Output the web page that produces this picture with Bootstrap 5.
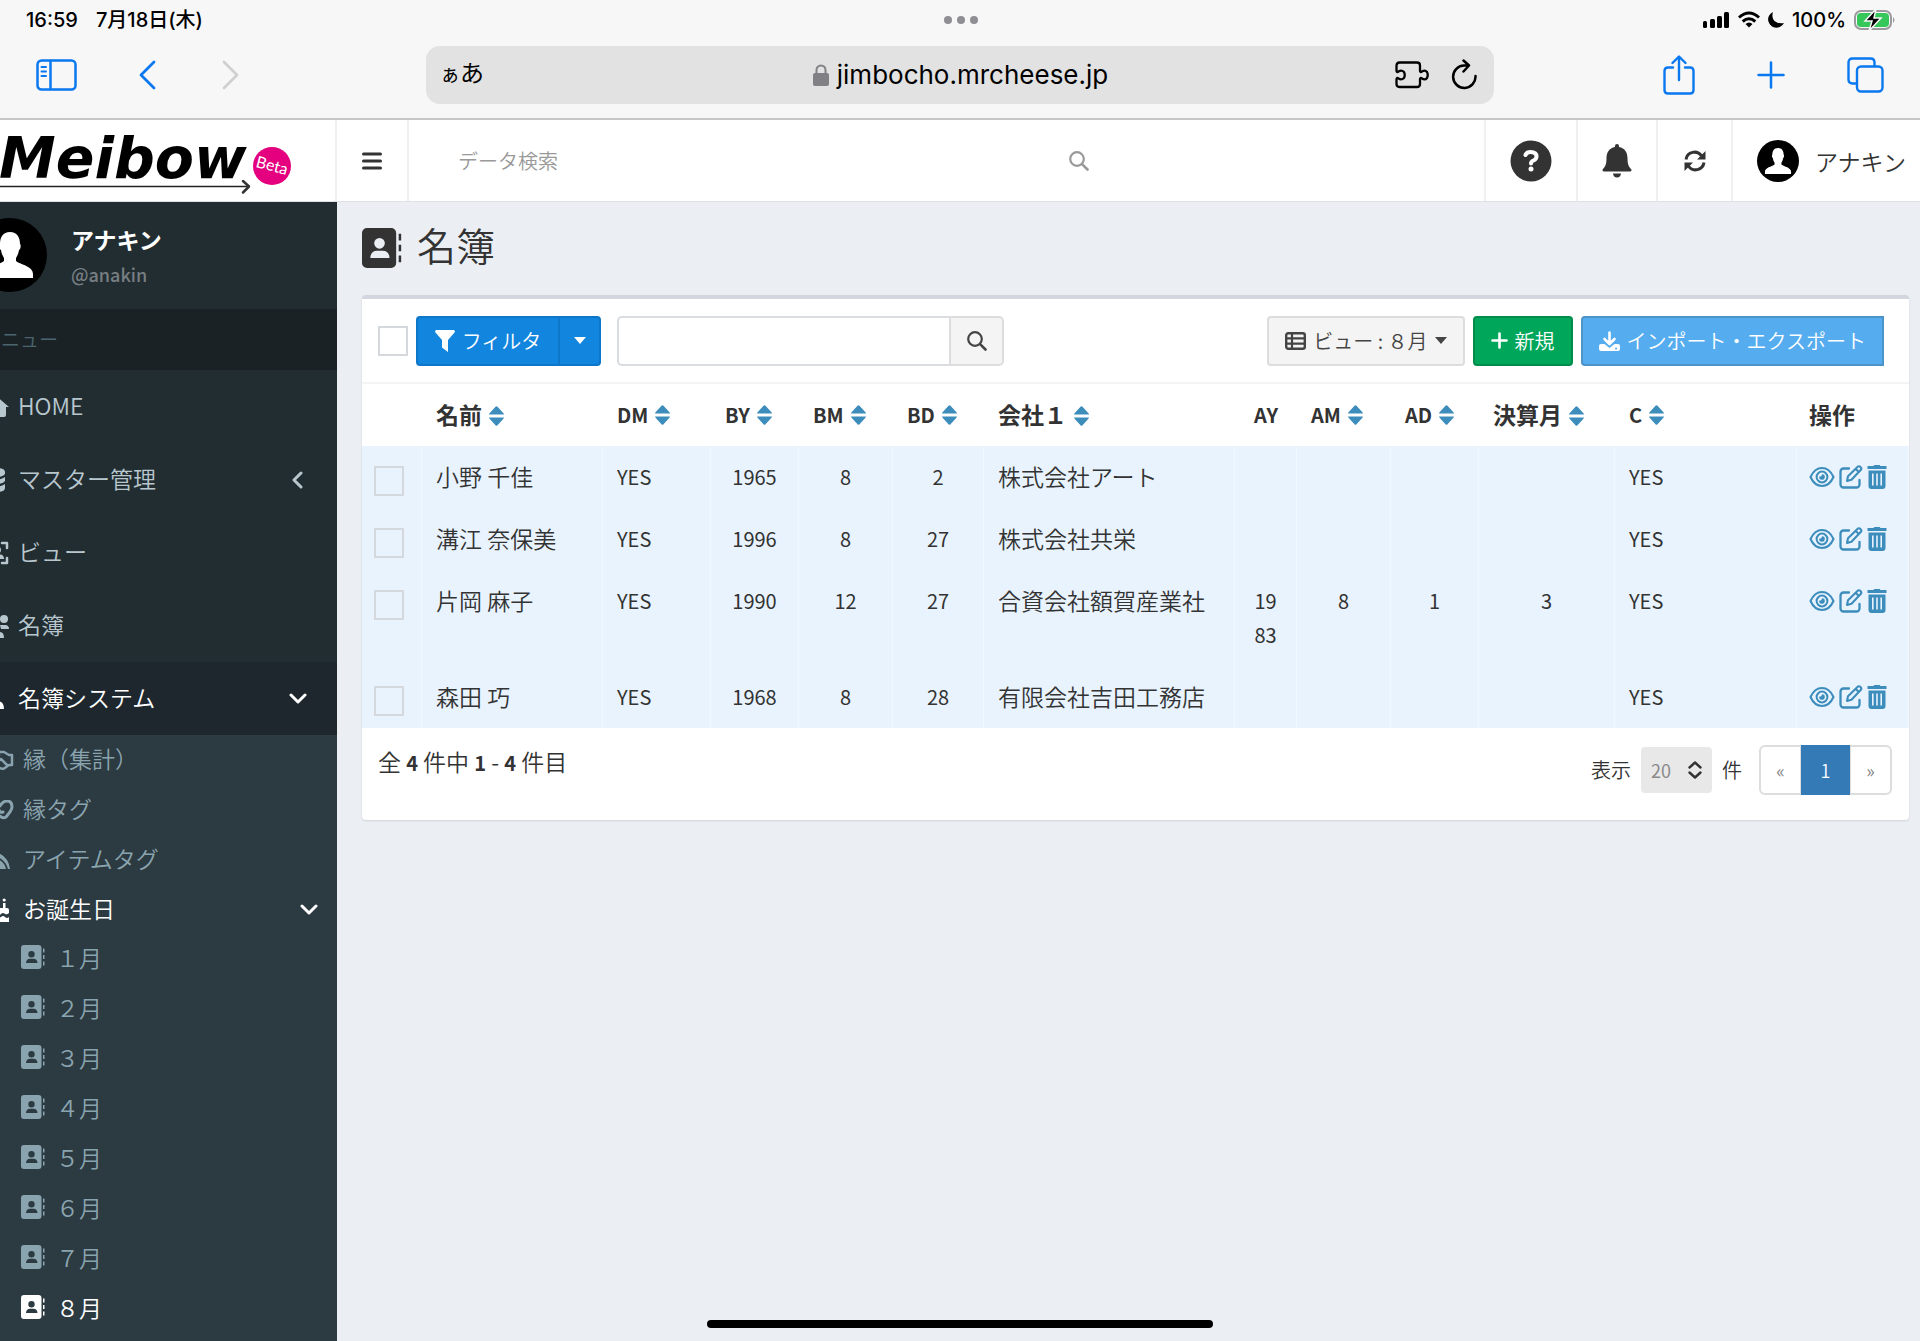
<!DOCTYPE html>
<html lang="ja">
<head>
<meta charset="utf-8">
<meta name="viewport" content="width=device-width, initial-scale=1">
<title>名簿 | Meibow</title>
<link href="https://cdn.jsdelivr.net/npm/bootstrap@5.3.0/dist/css/bootstrap.min.css" rel="stylesheet">
<style>
  body { font-family: "Noto Sans CJK JP", sans-serif; font-size: 23px; font-weight: 350; line-height: 34px; color: #333; background: #ebeff4; min-height: 100vh; }
  a { text-decoration: none; color: inherit; }
  svg { flex: none; display: block; }
  .ln { fill: none; stroke: currentColor; stroke-linecap: round; stroke-linejoin: round; }
  .bare { background: none; border: 0; padding: 0; color: inherit; }

  /* tablet browser frame */
  .chrome { background: #f7f7f7; border-bottom: 2px solid #c6c6c8; height: 120px; font-family: Inter, "Noto Sans CJK JP", sans-serif; font-weight: 400; color: #000; }
  .status-line { display: grid; grid-template-columns: 1fr auto 1fr; height: 39px; padding: 0 24px 0 26px; font-size: 20px; font-weight: 500; align-items: center; }
  .status-left { gap: 18px; }
  .tool-line { display: grid; grid-template-columns: 426px minmax(0, 1fr) 426px; height: 71px; align-items: center; color: #0a78ef; }
  .tools-left { padding-left: 36px; gap: 62px; }
  .tools-right { padding-right: 36px; gap: 62px; }
  .url-bar { background: #e2e2e2; border-radius: 14px; height: 58px; padding: 0 17px 0 14px; color: #000; display: grid; grid-template-columns: 1fr auto 1fr; align-items: center; }
  .url-tools { gap: 22px; }
  .url-host { font-size: 26px; }
  .aa-small { font-size: 20px; }
  .aa-large { font-size: 24px; }
  .home-bar { position: fixed; left: 50%; bottom: 13px; width: 506px; height: 8px; margin-left: -253px; border-radius: 5px; background: #000; z-index: 10; }

  /* header */
  .top-header { height: 82px; background: #fff; border-bottom: 1px solid #dde1e6; }
  .brand-cell { width: 335px; }
  .head-cell { border: 0; border-left: 2px solid #f0f0f2; height: 81px; display: flex; align-items: center; justify-content: center; color: #333; }
  .w-toggle { width: 72px; } .w-help { width: 92px; } .w-bell { width: 80px; } .w-sync { width: 75px; } .w-user { width: 189px; padding-left: 10px; gap: 16px; }
  .head-search { padding-left: 49px; max-width: 680px; color: #999; }
  .head-search input { border: 0; outline: 0; font-size: 20px; min-width: 0; padding: 0; font-weight: 350; }
  .head-search input::placeholder { color: #999; }

  /* sidebar */
  .app-side { width: 337px; background: #222d32; overflow: hidden; color: #b8c7ce; }
  .side-inner { margin-left: -27px; }
  .user-panel { height: 107px; gap: 24px; padding-top: 16px; color: #fff; line-height: 35px; font-weight: 700; }
  .user-handle { font-size: 18px; color: #777e82; font-weight: 500; }
  .menu-title { height: 61px; background: #1a2226; color: #4b646f; font-size: 19px; padding-left: 9px; line-height: 60px; }
  .side-link { height: 73px; padding: 0 30px 0 13px; gap: 9px; display: flex; align-items: center; }
  .side-link.is-open { background: #1e272d; color: #fff; }
  .sub-menu { background: #2c3a41; color: #8aa4af; }
  .sub-link { height: 50px; padding: 0 19px 0 17px; gap: 9px; display: flex; align-items: center; }
  .sub-link.is-open { height: 49px; color: #fff; }
  .month-link { height: 50px; padding: 0 0 4px 48px; gap: 11px; display: flex; align-items: center; }
  .month-link.is-current { color: #fff; }
  .side-link span, .sub-link span { flex: 1; padding-bottom: 4px; }

  /* content */
  .content-area { padding: 0 11px 0 25px; }
  .page-title { height: 93px; font-size: 39px; font-weight: 350; line-height: 60px; gap: 15px; margin: 0; padding-bottom: 2px; }
  .panel-box { background: #fff; border-top: 4px solid #d3d6de; border-radius: 4px; box-shadow: 0 1px 2px rgba(0,0,0,.12); }
  .panel-tools { height: 85px; padding: 0 25px 0 16px; border-bottom: 2px solid #f4f4f4; }
  .tick { appearance: none; width: 30px; height: 30px; border: 2px solid #d5d8dc; background: transparent; margin: 0; display: block; flex: none; }
  .tool-btn { height: 50px; font-size: 20px; line-height: 30px; border-radius: 4px; border: 2px solid; display: flex; align-items: center; gap: 7px; padding: 0 16px; white-space: nowrap; font-weight: 350; }
  .c-blue { background: #1285de; border-color: #0f77c9; color: #fff; }
  .c-gray { background: #f4f4f4; border-color: #ddd; color: #444; }
  .c-green { background: #00a65a; border-color: #008d4c; color: #fff; }
  .c-sky { background: #55acee; border-color: #4a94ca; color: #fff; border-radius: 4px 0 0 4px; }
  .filter-main { width: 144px; justify-content: center; border-radius: 4px 0 0 4px; }
  .filter-drop { width: 43px; margin-left: -2px; padding: 0; justify-content: center; border-radius: 0 4px 4px 0; }
  .find-box { height: 50px; width: 332px; border: 2px solid #d9dce0; border-right: 0; border-radius: 5px 0 0 5px; font-size: 20px; padding: 0 12px; }
  .find-btn { width: 55px; justify-content: center; border-radius: 0 5px 5px 0; padding: 0; }

  .roster { table-layout: fixed; width: 100%; margin: 0; border-collapse: separate; border-spacing: 0; }
  .roster th, .roster td { padding: 14px; vertical-align: top; font-size: 20px; line-height: 34px; font-weight: 400; }
  .roster th { white-space: nowrap; font-weight: 700; }
  .roster th.jp, .roster td.jp { font-size: 23px; white-space: nowrap; padding-top: 13px; }
  .roster td.jp { font-weight: 350; }
  .roster tbody td { background: #e9f3fe; border-right: 1px solid #f1f7fe; }
  .roster .num { text-align: center; word-break: break-all; }
  .roster td.pick { padding: 20px 0 0 12px; }
  .roster td.acts, .roster th.acts { padding-left: 12px; }
  .sorter { display: inline-block; margin-left: 7px; color: #3c8dbc; vertical-align: -2px; }
  .act-set { gap: 4px; height: 34px; color: #3c8dbc; }

  .panel-foot { height: 92px; padding: 0 17px 0 16px; }
  .count-note { margin-top: 16px; }
  .count-note b { font-size: 20px; }
  .per-page { font-size: 20px; gap: 10px; margin-top: 17px; }
  .per-page select { appearance: none; width: 71px; height: 46px; border: 0; border-radius: 4px; background: #e8e8e8; color: #8a8a8a; font-size: 18px; padding: 0 10px; }
  .select-wrap svg { position: absolute; right: 10px; top: 14px; pointer-events: none; }
  .pager { height: 50px; margin: 0 0 0 7px; }
  .pager .page-link { height: 50px; width: 43px; border: 2px solid #ddd; padding: 0; display: flex; align-items: center; justify-content: center; color: #777; font-size: 18px; }
  .pager .active .page-link { background: #337ab7; border-color: #337ab7; color: #fff; width: 49px; }
</style>
</head>
<body class="d-flex flex-column">

<svg width="0" height="0" class="position-absolute" aria-hidden="true">
  <symbol id="i-book" viewBox="0 0 24 24"><path fill="currentColor" fill-rule="evenodd" d="M3 0h14.500a3 3 0 0 1 3 3v18a3 3 0 0 1-3 3H3a3 3 0 0 1-3-3V3a3 3 0 0 1 3-3zm7.500 6a3.200 3.200 0 1 0 0 6.400 3.200 3.200 0 0 0 0-6.400zM5 18h11.500c0-2.900-1.800-4.300-4-4.300h-3.500c-2.200 0-4 1.400-4 4.300z"/><path fill="currentColor" d="M22 3.500h1.500v4H22zM22 10h1.500v4H22zM22 16.500h1.500v4H22z"/></symbol>
  <symbol id="i-down" viewBox="0 0 18 11"><path class="ln" stroke-width="3" d="M2 2l7 7 7-7"/></symbol>
  <symbol id="i-find" viewBox="0 0 20 20"><circle class="ln" cx="8" cy="8" r="6.800" stroke-width="2.200"/><path class="ln" stroke-width="2.600" d="M13.300 13.300L18.500 18.500"/></symbol>
  <symbol id="i-sort" viewBox="0 0 15 20"><path fill="currentColor" d="M0 8.500C0 8 .5 7.300 1 6.800L6.500.7q1-1 2 0L14 6.800c.5.500 1 1.200 1 1.700zM0 11.500h15c0 .5-.5 1.200-1 1.700l-5.500 6.100q-1 1-2 0L1 13.200c-.5-.5-1-1.200-1-1.700z"/></symbol>
  <symbol id="i-eye" viewBox="0 0 26 22"><path class="ln" stroke-width="2.100" d="M1.500 11C4 5.500 8 2 13 2s9 3.500 11.500 9C22 16.500 18 20 13 20S4 16.500 1.500 11z"/><circle class="ln" cx="13" cy="11" r="5.400" stroke-width="2"/><path fill="currentColor" d="M13 8.200a2.800 2.800 0 1 1-2.700 2.200c1.400.6 2.500-.5 2.700-2.200z"/></symbol>
  <symbol id="i-edit" viewBox="0 0 24 24"><path class="ln" stroke-width="2.300" d="M10 3.500H4.500a3 3 0 0 0-3 3V19.500a3 3 0 0 0 3 3h13a3 3 0 0 0 3-3V15"/><path class="ln" stroke-width="2.100" d="M8 16l1-4.700L18.700 1.700q1.300-1 2.700.2 1.600 1.500.5 2.900L12.500 14.700zM16.700 3.900l3.200 3.200"/></symbol>
  <symbol id="i-trash" viewBox="0 0 20 24"><path fill="currentColor" fill-rule="evenodd" d="M6.500 1l.8-1h5.400l.8 1H19.500v3H.5V1zM1.500 5.500h17V21a3 3 0 0 1-3 3h-11a3 3 0 0 1-3-3zM5 8.500v12h1.600v-12zm4.200 0v12h1.600v-12zm4.200 0v12H15v-12z"/></symbol>
  <symbol id="i-user" viewBox="0 0 74 74"><circle cx="37" cy="37" r="37" fill="#000"/><path fill="#fff" d="M37 14c7 0 10 5 10 12 1 0 1 5-1 6-.5 4-2 6-3 8v3c5 4 17 5 17 13v4H14v-4c0-8 12-9 17-13v-3c-1-2-2.500-4-3-8-2-1-2-6-1-6 0-7 3-12 10-12z"/></symbol>
</svg>

<div class="chrome">
  <div class="status-line">
    <div class="status-left d-flex"><span>16:59</span><span>7月18日(木)</span></div>
    <svg width="34" height="8" fill="#8e8e93"><circle cx="4" cy="4" r="4"/><circle cx="17" cy="4" r="4"/><circle cx="30" cy="4" r="4"/></svg>
    <div class="d-flex align-items-center justify-content-end gap-2">
      <svg width="27" height="16"><rect y="9" width="4" height="7" rx="1.500"/><rect x="7" y="7" width="5" height="9" rx="1.500"/><rect x="14" y="4" width="5" height="12" rx="1.500"/><rect x="21" y="0" width="5" height="16" rx="1.500"/></svg>
      <svg width="22" height="17"><path class="ln" style="stroke-linecap:butt" stroke-width="3" d="M1 6.500Q11-2.500 21 6.500M4.700 10.500Q11 5 17.300 10.500"/><path d="M7.500 13Q11 10 14.500 13L11 16.500z"/></svg>
      <svg width="16" height="16"><path d="M5 0C3 6 6 12.500 16 11 13 16 7 17 3.500 14-1.500 10-1 3 5 0z"/></svg>
      <span>100%</span>
      <svg width="42" height="22"><rect x="1" y="2" width="36" height="18" rx="6" fill="none" stroke="#9a9a9e" stroke-width="2"/><rect x="3" y="4" width="32" height="14" rx="4" fill="#35c759"/><path d="M39 8q3 3 0 6z" fill="#9a9a9e"/><path d="M22 0L11 12h7l-3 10L27 9h-7z" stroke="#f7f7f7" stroke-width="1.500"/></svg>
    </div>
  </div>
  <div class="tool-line">
    <div class="tools-left d-flex align-items-center">
      <button class="bare" aria-label="サイドバー"><svg width="41" height="32"><rect class="ln" x="1.500" y="1.500" width="38" height="29" rx="4" stroke-width="2.500"/><path class="ln" stroke-width="2.500" d="M14.500 2v28"/><path class="ln" stroke-width="2" d="M5.500 8h4.500M5.500 12.500h4.500M5.500 17h4.500"/></svg></button>
      <button class="bare" aria-label="戻る"><svg width="17" height="30"><path class="ln" stroke-width="2.800" d="M15 2L2 15l13 13"/></svg></button>
      <button class="bare ms-1" aria-label="進む" disabled><svg width="17" height="30" color="#cfcfd1"><path class="ln" stroke-width="2.600" d="M2 2l13 13L2 28"/></svg></button>
    </div>
    <div class="url-bar">
      <div><span class="aa-small">ぁ</span><span class="aa-large">あ</span></div>
      <div class="d-flex align-items-center gap-2 ps-1">
        <svg width="16" height="22" fill="#808085"><rect y="9" width="16" height="13" rx="2"/><path fill="none" stroke="#808085" stroke-width="2" d="M3.500 10V6a4.500 4.500 0 0 1 9 0v4"/></svg>
        <span class="url-host">jimbocho.mrcheese.jp</span>
      </div>
      <div class="url-tools d-flex align-items-center justify-content-end">
        <svg width="34" height="28"><path class="ln" stroke-width="2.300" d="M4.500 1.500H22q3 0 3 3V10q.5 2 2 .5 3-2 5 .5 1.500 3 0 6-2 2.500-5 .5-1.500-1.500-2 .5V23q0 3-3 3H4.500Q1.500 26 1.500 23v-5q.5-2 2-.5 3 2 5.500-.5 1.500-3 0-6-2.500-2.500-5.500-.5-1.500 1.500-2-.5V4.500q0-3 3-3z"/></svg>
        <button class="bare" aria-label="再読み込み"><svg width="26" height="31"><path class="ln" stroke-width="2.500" d="M16 6.500H13A11.200 11.200 0 1 0 24.500 17M12.500 1.500l5.500 5-5.500 6"/></svg></button>
      </div>
    </div>
    <div class="tools-right d-flex align-items-center justify-content-end">
      <button class="bare" aria-label="共有"><svg width="32" height="40"><path class="ln" stroke-width="2.400" d="M10 12.500H5q-3.500 0-3.500 3.500v19q0 3.500 3.500 3.500h22q3.500 0 3.500-3.500V16q0-3.500-3.500-3.500h-5M16 25V2M9.500 8L16 1.500 22.500 8"/></svg></button>
      <button class="bare" aria-label="追加"><svg width="28" height="28"><path class="ln" stroke-width="2.500" d="M14 1.500v25M1.500 14h25"/></svg></button>
      <button class="bare" aria-label="タブ"><svg width="37" height="36"><rect class="ln" x="10" y="9.500" width="25.500" height="25" rx="4" stroke-width="2.400"/><path class="ln" stroke-width="2.400" d="M9 26.500H5.500q-4 0-4-4v-17q0-4 4-4h18q4 0 4 4V8.500"/></svg></button>
    </div>
  </div>
</div>

<header class="top-header d-flex">
  <a href="#" class="brand-cell" aria-label="Meibow Beta">
    <svg width="320" height="80">
      <text x="-1" y="58" font-family="DejaVu Sans, sans-serif" font-size="57" font-weight="700" font-style="italic" fill="#000">Meibow</text>
      <path d="M0 66.500h248" stroke="#222" stroke-width="1.500"/><path class="ln" stroke="#000" stroke-width="2.500" d="M243 61l6 5.500-6 6"/>
      <circle cx="272" cy="46" r="19" fill="#e4007f"/>
      <text x="272" y="51" text-anchor="middle" transform="rotate(15 272 46)" font-family="Lato, sans-serif" font-size="16" font-weight="400" fill="#fff">Beta</text>
    </svg>
  </a>
  <button class="bare head-cell w-toggle" aria-label="メニュー切替"><svg width="20" height="18"><path class="ln" stroke-width="3" d="M1.500 2h17M1.500 9h17M1.500 16h17"/></svg></button>
  <div class="head-cell flex-grow-1 justify-content-start">
    <form class="head-search d-flex align-items-center flex-grow-1">
      <input type="search" class="flex-grow-1" placeholder="データ検索" aria-label="データ検索">
      <button type="button" class="bare" aria-label="検索"><svg width="20" height="20"><use href="#i-find"/></svg></button>
    </form>
  </div>
  <a href="#" class="head-cell w-help" aria-label="ヘルプ"><svg width="42" height="42"><circle cx="21" cy="21" r="20.500" fill="#333"/><path fill="none" stroke="#fff" stroke-width="4" stroke-linecap="round" stroke-linejoin="round" d="M15.500 15q1-3 5-3 6 0 6 4.500 0 2.500-3 4-2.500 1-2.500 3"/><circle cx="21" cy="29" r="2.500" fill="#fff"/></svg></a>
  <a href="#" class="head-cell w-bell" aria-label="通知"><svg width="30" height="34" fill="#333"><path d="M15 0q2 0 2 2v1c6 1 8.500 6 8.500 11 0 6 1 8.500 3.500 11 1 1 .5 2.500-1 2.500H2c-1.500 0-2-1.500-1-2.500C3.500 22.500 4.500 20 4.500 14 4.500 9 7 4 13 3V2q0-2 2-2zM11 29.500h8q-.5 4-4 4t-4-4z"/></svg></a>
  <a href="#" class="head-cell w-sync" aria-label="更新"><svg width="24" height="22"><path fill="none" stroke="#333" stroke-width="3" d="M3 9.500A8.500 8.500 0 0 1 18.500 6M21 12.500A8.500 8.500 0 0 1 5.500 16"/><path fill="#333" d="M22.500 1v8.500H14zM1.500 21v-8.500H10z"/></svg></a>
  <a href="#" class="head-cell w-user"><svg width="42" height="42"><use href="#i-user"/></svg><span>アナキン</span></a>
</header>

<div class="d-flex flex-grow-1">
  <nav class="app-side flex-shrink-0 d-flex flex-column">
    <div class="side-inner d-flex flex-column flex-grow-1">
      <div class="user-panel d-flex">
        <svg width="74" height="74"><use href="#i-user"/></svg>
        <div class="pt-1"><div>アナキン</div><div class="user-handle">@anakin</div></div>
      </div>
      <div class="menu-title">メニュー</div>
      <a href="#" class="side-link"><svg width="23" height="20"><path fill="currentColor" d="M11.500 0L23 10h-3v8q0 2-2 2h-4v-6H9v6H5q-2 0-2-2v-8H0z"/></svg><span>HOME</span></a>
      <a href="#" class="side-link"><svg width="23" height="24" fill="currentColor"><path d="M1 4q0-4 9-4t9 4v2q-2 3-9 3T1 6zM1 9q3 2.500 9 2.500T19 9v4q-2 3-9 3t-9-3zM1 16q3 2.500 9 2.500t9-2.500v4q0 4-9 4t-9-4z"/></svg><span>マスター管理</span><svg width="12" height="18" class="me-1"><path class="ln" stroke-width="3" d="M10 2L3 9l7 7"/></svg></a>
      <a href="#" class="side-link"><svg width="23" height="24"><path class="ln" stroke-width="2.500" d="M2 7V2h5M16 2h5v5M2 17v5h5M16 22h5v-5"/><circle cx="11.500" cy="9" r="3.500" fill="currentColor"/><path fill="currentColor" d="M5 18q0-4.500 4-4.500h5q4 0 4 4.500z"/></svg><span>ビュー</span></a>
      <a href="#" class="side-link"><svg width="23" height="24" fill="currentColor"><circle cx="18" cy="5" r="4"/><circle cx="5" cy="5" r="4"/><path d="M14 11h5q4 0 4 4h-8zM0 15q0-4 4-4h5l-1 4zM6 24q0-6 4-6h4q4 0 4 6z"/></svg><span>名簿</span></a>
      <a href="#" class="side-link is-open"><svg width="23" height="24" fill="currentColor"><circle cx="8" cy="7" r="5"/><path d="M0 22q0-8 6-8h5q7 0 7 8z"/></svg><span>名簿システム</span><svg width="18" height="11"><use href="#i-down"/></svg></a>
      <div class="sub-menu flex-grow-1">
        <a href="#" class="sub-link"><svg width="24" height="20"><path class="ln" stroke-width="2.500" d="M1 4h4l4-2h5l5 3h3v10h-3l-5 3.500q-4 1-7-3L3 13H1M9 5l-3 4q2 3 5 0l6 6"/></svg><span>縁（集計）</span></a>
        <a href="#" class="sub-link"><svg width="24" height="20"><path class="ln" stroke-width="3" d="M10 6q3-5 7-5 5 0 5 6 0 3-6 10-3 2-6-1M13 12q-3 1-4-2"/></svg><span>縁タグ</span></a>
        <a href="#" class="sub-link"><svg width="24" height="20"><path fill="currentColor" d="M0 1q18 2 20 18h-2Q15 7 0 5z"/><path fill="currentColor" d="M0 7q14 2 16 12H0z"/></svg><span>アイテムタグ</span></a>
        <a href="#" class="sub-link is-open"><svg width="24" height="24" fill="currentColor"><path d="M1 12q0-2 2-2h3V6h2v4h5V5h2.500v5H17q2 0 2 2v3q-2 2-4 1-2-2-4 0t-5 0q-2-2-5 0zM1 19q3-2 5 0t5 0q2-2 4 0t4 0v5H1z"/><circle cx="14.200" cy="2" r="1.600"/></svg><span>お誕生日</span><svg width="18" height="11"><use href="#i-down"/></svg></a>
        <a href="#" class="month-link"><svg width="24" height="24"><use href="#i-book"/></svg>１月</a>
        <a href="#" class="month-link"><svg width="24" height="24"><use href="#i-book"/></svg>２月</a>
        <a href="#" class="month-link"><svg width="24" height="24"><use href="#i-book"/></svg>３月</a>
        <a href="#" class="month-link"><svg width="24" height="24"><use href="#i-book"/></svg>４月</a>
        <a href="#" class="month-link"><svg width="24" height="24"><use href="#i-book"/></svg>５月</a>
        <a href="#" class="month-link"><svg width="24" height="24"><use href="#i-book"/></svg>６月</a>
        <a href="#" class="month-link"><svg width="24" height="24"><use href="#i-book"/></svg>７月</a>
        <a href="#" class="month-link is-current"><svg width="24" height="24"><use href="#i-book"/></svg>８月</a>
      </div>
    </div>
  </nav>

  <main class="content-area flex-grow-1">
    <h1 class="page-title d-flex align-items-center"><svg width="40" height="40"><use href="#i-book"/></svg><span class="pb-2">名簿</span></h1>

    <section class="panel-box">
      <div class="panel-tools d-flex align-items-center">
        <input type="checkbox" class="tick me-2" aria-label="すべて選択">
        <button class="tool-btn c-blue filter-main"><svg width="20" height="22"><path fill="#fff" d="M1 0h18q1.500 1 .5 2.500L13 10v12l-6-4.500V10L.5 2.500Q-.500 1 1 0z"/></svg>フィルタ</button>
        <button class="tool-btn c-blue filter-drop" aria-label="フィルタ選択"><svg width="12" height="7"><path fill="#fff" d="M0 0h12L6 7z"/></svg></button>
        <input type="text" class="find-box ms-3" aria-label="キーワード">
        <button class="tool-btn c-gray find-btn" aria-label="検索"><svg width="20" height="20"><use href="#i-find"/></svg></button>
        <div class="d-flex ms-auto gap-2">
          <button class="tool-btn c-gray"><svg width="21" height="18"><rect class="ln" x="1.200" y="1.200" width="18.600" height="15.600" rx="2" stroke-width="2.400"/><path class="ln" stroke-width="2.200" d="M2 6.300h17M2 11.600h17M7 2v14"/></svg><span>ビュー : ８月</span><svg width="12" height="7" class="ms-n1"><path fill="#444" d="M0 0h12L6 7z"/></svg></button>
          <button class="tool-btn c-green"><svg width="17" height="17"><path class="ln" stroke-width="2.600" d="M8.500 1.500v14M1.500 8.500h14"/></svg>新規</button>
          <button class="tool-btn c-sky"><svg width="21" height="20"><path class="ln" stroke-width="2.600" d="M10.500 1.500V12M5.500 8l5 5 5-5"/><path fill="#fff" fill-rule="evenodd" d="M2 13h3.500l5 4 5-4H19q2 0 2 2v3q0 2-2 2H2q-2 0-2-2v-3q0-2 2-2zm15 3.500a1 1 0 1 0 .1 0z"/></svg>インポート・エクスポート</button>
        </div>
      </div>

      <table class="roster">
        <colgroup><col style="width:60px"><col style="width:181px"><col style="width:108px"><col style="width:88px"><col style="width:94px"><col style="width:91px"><col style="width:251px"><col style="width:62px"><col style="width:94px"><col style="width:88px"><col style="width:136px"><col style="width:182px"><col></colgroup>
        <thead>
          <tr>
            <th></th>
            <th class="jp">名前<svg class="sorter" width="15" height="20"><use href="#i-sort"/></svg></th>
            <th>DM<svg class="sorter" width="15" height="20"><use href="#i-sort"/></svg></th>
            <th>BY<svg class="sorter" width="15" height="20"><use href="#i-sort"/></svg></th>
            <th>BM<svg class="sorter" width="15" height="20"><use href="#i-sort"/></svg></th>
            <th>BD<svg class="sorter" width="15" height="20"><use href="#i-sort"/></svg></th>
            <th class="jp">会社１<svg class="sorter" width="15" height="20"><use href="#i-sort"/></svg></th>
            <th class="num">AY</th>
            <th>AM<svg class="sorter" width="15" height="20"><use href="#i-sort"/></svg></th>
            <th>AD<svg class="sorter" width="15" height="20"><use href="#i-sort"/></svg></th>
            <th class="jp">決算月<svg class="sorter" width="15" height="20"><use href="#i-sort"/></svg></th>
            <th>C<svg class="sorter" width="15" height="20"><use href="#i-sort"/></svg></th>
            <th class="jp acts">操作</th>
          </tr>
        </thead>
        <tbody>
          <tr>
            <td class="pick"><input type="checkbox" class="tick" aria-label="小野 千佳を選択"></td>
            <td class="jp">小野 千佳</td><td>YES</td><td class="num">1965</td><td class="num">8</td><td class="num">2</td><td class="jp">株式会社アート</td><td class="num"></td><td class="num"></td><td class="num"></td><td class="num"></td><td>YES</td>
            <td class="acts"><div class="act-set d-flex align-items-center"><a href="#" aria-label="表示"><svg width="26" height="22"><use href="#i-eye"/></svg></a><a href="#" aria-label="編集"><svg width="24" height="24"><use href="#i-edit"/></svg></a><a href="#" aria-label="削除"><svg width="20" height="24"><use href="#i-trash"/></svg></a></div></td>
          </tr>
          <tr>
            <td class="pick"><input type="checkbox" class="tick" aria-label="溝江 奈保美を選択"></td>
            <td class="jp">溝江 奈保美</td><td>YES</td><td class="num">1996</td><td class="num">8</td><td class="num">27</td><td class="jp">株式会社共栄</td><td class="num"></td><td class="num"></td><td class="num"></td><td class="num"></td><td>YES</td>
            <td class="acts"><div class="act-set d-flex align-items-center"><a href="#" aria-label="表示"><svg width="26" height="22"><use href="#i-eye"/></svg></a><a href="#" aria-label="編集"><svg width="24" height="24"><use href="#i-edit"/></svg></a><a href="#" aria-label="削除"><svg width="20" height="24"><use href="#i-trash"/></svg></a></div></td>
          </tr>
          <tr>
            <td class="pick"><input type="checkbox" class="tick" aria-label="片岡 麻子を選択"></td>
            <td class="jp">片岡 麻子</td><td>YES</td><td class="num">1990</td><td class="num">12</td><td class="num">27</td><td class="jp">合資会社額賀産業社</td><td class="num">1983</td><td class="num">8</td><td class="num">1</td><td class="num">3</td><td>YES</td>
            <td class="acts"><div class="act-set d-flex align-items-center"><a href="#" aria-label="表示"><svg width="26" height="22"><use href="#i-eye"/></svg></a><a href="#" aria-label="編集"><svg width="24" height="24"><use href="#i-edit"/></svg></a><a href="#" aria-label="削除"><svg width="20" height="24"><use href="#i-trash"/></svg></a></div></td>
          </tr>
          <tr>
            <td class="pick"><input type="checkbox" class="tick" aria-label="森田 巧を選択"></td>
            <td class="jp">森田 巧</td><td>YES</td><td class="num">1968</td><td class="num">8</td><td class="num">28</td><td class="jp">有限会社吉田工務店</td><td class="num"></td><td class="num"></td><td class="num"></td><td class="num"></td><td>YES</td>
            <td class="acts"><div class="act-set d-flex align-items-center"><a href="#" aria-label="表示"><svg width="26" height="22"><use href="#i-eye"/></svg></a><a href="#" aria-label="編集"><svg width="24" height="24"><use href="#i-edit"/></svg></a><a href="#" aria-label="削除"><svg width="20" height="24"><use href="#i-trash"/></svg></a></div></td>
          </tr>
        </tbody>
      </table>

      <div class="panel-foot d-flex justify-content-between align-items-start">
        <div class="count-note">全 <b>4</b> 件中 <b>1</b> - <b>4</b> 件目</div>
        <div class="per-page d-flex align-items-center">
          <label for="perPage">表示</label>
          <div class="select-wrap position-relative">
            <select id="perPage"><option>20</option></select>
            <svg width="14" height="18" color="#333"><path class="ln" stroke-width="2.400" d="M1.500 6.500L7 1.500l5.500 5M1.500 11.500L7 16.500l5.500-5"/></svg>
          </div>
          <span>件</span>
          <ul class="pagination pager">
            <li class="page-item disabled"><a class="page-link bg-white" href="#" aria-label="前へ">«</a></li>
            <li class="page-item active"><a class="page-link" href="#">1</a></li>
            <li class="page-item disabled"><a class="page-link bg-white" href="#" aria-label="次へ">»</a></li>
          </ul>
        </div>
      </div>
    </section>
  </main>
</div>

<div class="home-bar"></div>
<script src="https://cdn.jsdelivr.net/npm/bootstrap@5.3.0/dist/js/bootstrap.bundle.min.js"></script>
</body>
</html>
